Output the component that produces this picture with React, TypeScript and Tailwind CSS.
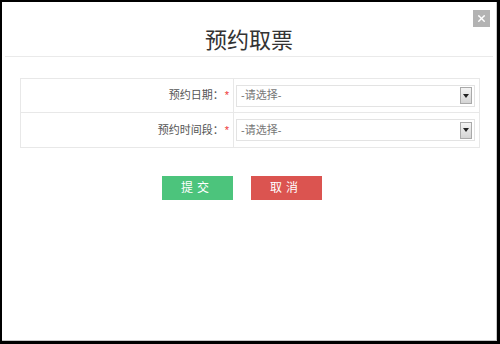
import { X } from 'lucide-react'

const font = { fontFamily: '"Liberation Sans", "Noto Sans CJK SC", sans-serif' }

function SelectBox() {
  return (
    <div className="flex h-[22px] w-[239px] items-center justify-between border border-[#e3e3e3] bg-white pl-[4px] pr-[2px]">
      <span className="text-[11px] text-[#777]">-请选择-</span>
      <div className="flex h-[17px] w-[12px] items-center justify-center border border-[#a9a9a9] bg-gradient-to-b from-[#f4f4f4] to-[#d4d4d4]">
        <svg width="6" height="4" viewBox="0 0 6 4">
          <path d="M0 0h6L3 4z" fill="#222" />
        </svg>
      </div>
    </div>
  )
}

function Row({ label, last }: { label: string; last?: boolean }) {
  return (
    <div className={`flex h-[34px] ${last ? '' : 'border-b border-[#e8e8e8]'}`}>
      <div className="flex w-[213px] items-center justify-end border-r border-[#e8e8e8] pr-[4px] text-[11px] text-[#555]">
        {label}：<span className="ml-[1px] text-[#e33]">*</span>
      </div>
      <div className="flex items-center pl-[2px]">
        <SelectBox />
      </div>
    </div>
  )
}

export default function App() {
  return (
    <div
      className="h-[344px] w-[500px] border-b-[3px] border-l-[2px] border-r-[3px] border-t-[2px] border-black bg-white"
      style={font}
    >
      <div className="relative h-full w-full border-b border-r border-[#c8c8c8]">
        <button className="absolute right-[6px] top-[8px] flex h-[17px] w-[17px] items-center justify-center bg-[#b3b3b3]">
          <X size={11} strokeWidth={3} color="#fff" />
        </button>

        <div className="mx-[3px] flex h-[55px] items-center justify-center border-b border-[#eaeaea] pt-[23px]">
          <h1 className="text-[22px] font-normal leading-none text-[#333]">预约取票</h1>
        </div>

        <div className="pl-[18px] pr-[16px] pt-[21px]">
          <div className="border border-[#e8e8e8]">
            <Row label="预约日期" />
            <Row label="预约时间段" last />
          </div>
        </div>

        <div className="flex justify-center gap-[18px] pr-[15px] pt-[28px]">
          <button className="h-[24px] w-[71px] bg-[#4cc47c] text-[12px] tracking-[4px] text-white">提交</button>
          <button className="h-[24px] w-[71px] bg-[#db5450] text-[12px] tracking-[4px] text-white">取消</button>
        </div>
      </div>
    </div>
  )
}
